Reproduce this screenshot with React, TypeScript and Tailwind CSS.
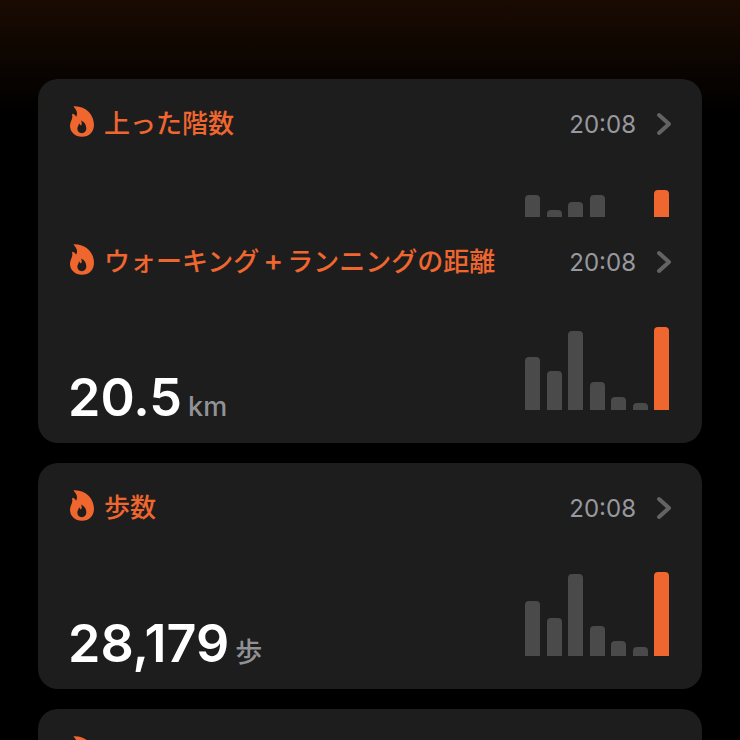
type Metric = {
  title: string;
  time: string;
  bars: number[];
  value?: string;
  unit?: string;
};

const floors: Metric = {
  title: "上った階数",
  time: "20:08",
  bars: [22, 7, 15, 22, 0, 0, 27],
};

const distance: Metric = {
  title: "ウォーキング+ランニングの距離",
  time: "20:08",
  bars: [53, 39, 79, 28, 13, 7, 83],
  value: "20.5",
  unit: "km",
};

const steps: Metric = {
  title: "歩数",
  time: "20:08",
  bars: [55, 38, 82, 30, 15, 9, 84],
  value: "28,179",
  unit: "歩",
};

const resting: Metric = {
  title: "安静時消費エネルギー",
  time: "20:08",
  bars: [60, 58, 62, 59, 61, 60, 50],
  value: "1,480",
  unit: "kcal",
};

function Flame() {
  return (
    <svg viewBox="0 0 72 92" className="mb-1.5 h-[31px] w-6 shrink-0" aria-hidden="true">
      <path
        fill="#f0662f"
        fillRule="evenodd"
        d="M12 3C9 1 11 0 15 0C48 0 72 26 72 56C72 78 57 92 36 92C15 92 0 78 0 59C0 48 6 41 7 33C7 29 6 26 7 23C12 24 16 27 18 32C21 28 22 22 20 15C18 10 15 6 12 3ZM33 43C36 49 36 54 33 58C30 56 29 53 27 51C27 57 22 61 22 67C22 76 28 81 35 81C44 81 49 75 49 67C49 56 43 47 33 43Z"
      />
    </svg>
  );
}

function Chevron() {
  return (
    <svg viewBox="0 0 16 24" className="ml-5 h-6 w-4 shrink-0" fill="none" aria-hidden="true">
      <path d="M3 3L13 12L3 21" stroke="#636363" strokeWidth="4" strokeLinecap="round" strokeLinejoin="round" />
    </svg>
  );
}

function Chart({ bars }: { bars: number[] }) {
  return (
    <div className="mr-[3px] flex w-36 shrink-0 items-end justify-between">
      {bars.map((height, i) => (
        <div
          key={i}
          className={`w-[15px] rounded-t-[4px] ${i === bars.length - 1 ? "bg-[#f0662f]" : "bg-[#4a4a4a]"}`}
          style={{ height }}
        />
      ))}
    </div>
  );
}

function Title({ text }: { text: string }) {
  const [first, second] = text.split("+");
  return (
    <h2 className="ml-2.5 flex-1 pb-1 whitespace-nowrap font-['Noto_Sans_CJK_JP',sans-serif] text-[26px] leading-[34px] font-medium text-[#f0662f]">
      {first}
      {second && (
        <>
          <span className="inline-block w-7 text-center font-['Inter',sans-serif] text-[30px] leading-[30px]">+</span>
          {second}
        </>
      )}
    </h2>
  );
}

function MetricSection({ metric }: { metric: Metric }) {
  return (
    <section className="pt-7 pr-[30px] pl-8">
      <button type="button" className="flex h-[34px] w-full items-center text-left">
        <Flame />
        <Title text={metric.title} />
        <time className="pt-0.5 font-['Inter',sans-serif] text-[24px] leading-[34px] text-[#98989d]">{metric.time}</time>
        <Chevron />
      </button>
      {metric.value ? (
        <div className="flex h-[164px] items-end justify-between pb-[18px]">
          <p className="-ml-0.5 flex items-baseline gap-1.5 font-['Inter','Noto_Sans_CJK_JP',sans-serif]">
            <span className="text-[52px] leading-[54px] font-semibold text-white">{metric.value}</span>
            <span className="text-[27px] leading-[34px] font-medium text-[#929296]">{metric.unit}</span>
          </p>
          <div className="pb-[15px]">
            <Chart bars={metric.bars} />
          </div>
        </div>
      ) : (
        <div className="flex h-[76px] items-end justify-end">
          <Chart bars={metric.bars} />
        </div>
      )}
    </section>
  );
}

function Card({ metrics }: { metrics: Metric[] }) {
  return (
    <article className="shrink-0 overflow-hidden rounded-[20px] bg-[#1d1d1d]">
      {metrics.map((metric) => (
        <MetricSection key={metric.title} metric={metric} />
      ))}
    </article>
  );
}

export default function App() {
  return (
    <main className="flex h-screen flex-col gap-5 overflow-hidden bg-black bg-linear-to-b/srgb from-[#1a0b02] to-black to-[115px] px-[38px] pt-[79px]">
      <Card metrics={[floors, distance]} />
      <Card metrics={[steps]} />
      <Card metrics={[resting]} />
    </main>
  );
}
